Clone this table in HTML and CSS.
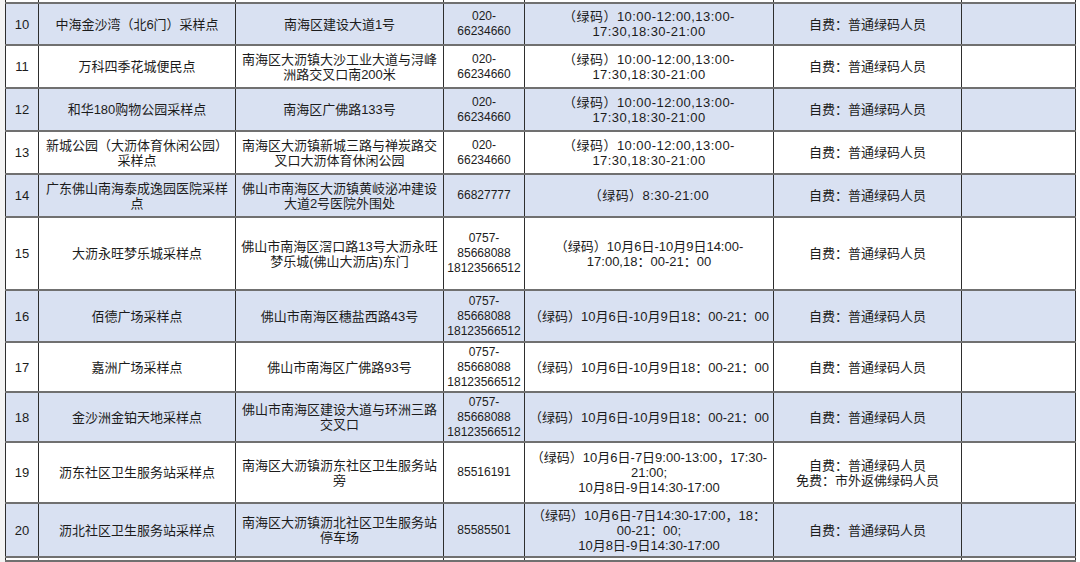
FILE: index.html
```html
<!DOCTYPE html>
<html lang="zh-CN">
<head>
<meta charset="utf-8">
<title>采样点</title>
<link rel="stylesheet" href="styles.css">
</head>
<body>
<div class="sheet">
<table class="grid">
<colgroup>
<col class="c1"><col class="c2"><col class="c3"><col class="c4"><col class="c5"><col class="c6"><col class="c7">
</colgroup>
<tbody>
<tr class="stub"><td></td><td></td><td></td><td></td><td></td><td></td><td></td></tr>
<tr class="blue h43a"><td>10</td><td>中海金沙湾（北6门）采样点</td><td>南海区建设大道1号</td><td class="tel">020-<br>66234660</td><td class="time">（绿码）10:00-12:00,13:00-<br>17:30,18:30-21:00</td><td>自费：普通绿码人员</td><td></td></tr>
<tr class="h43"><td>11</td><td>万科四季花城便民点</td><td>南海区大沥镇大沙工业大道与浔峰<br>洲路交叉口南200米</td><td class="tel">020-<br>66234660</td><td class="time">（绿码）10:00-12:00,13:00-<br>17:30,18:30-21:00</td><td>自费：普通绿码人员</td><td></td></tr>
<tr class="blue h43"><td>12</td><td>和华180购物公园采样点</td><td>南海区广佛路133号</td><td class="tel">020-<br>66234660</td><td class="time">（绿码）10:00-12:00,13:00-<br>17:30,18:30-21:00</td><td>自费：普通绿码人员</td><td></td></tr>
<tr class="h43"><td>13</td><td>新城公园（大沥体育休闲公园）<br>采样点</td><td>南海区大沥镇新城三路与禅炭路交<br>叉口大沥体育休闲公园</td><td class="tel">020-<br>66234660</td><td class="time">（绿码）10:00-12:00,13:00-<br>17:30,18:30-21:00</td><td>自费：普通绿码人员</td><td></td></tr>
<tr class="blue h43"><td>14</td><td>广东佛山南海泰成逸园医院采样<br>点</td><td>佛山市南海区大沥镇黄岐泌冲建设<br>大道2号医院外围处</td><td class="tel">66827777</td><td class="time">（绿码）8:30-21:00</td><td>自费：普通绿码人员</td><td></td></tr>
<tr class="h73"><td>15</td><td>大沥永旺梦乐城采样点</td><td>佛山市南海区滘口路13号大沥永旺<br>梦乐城(佛山大沥店)东门</td><td class="tel">0757-<br>85668088<br>18123566512</td><td>（绿码）10月6日-10月9日14:00-<br>17:00,18：00-21：00</td><td>自费：普通绿码人员</td><td></td></tr>
<tr class="blue h52"><td>16</td><td>佰德广场采样点</td><td>佛山市南海区穗盐西路43号</td><td class="tel">0757-<br>85668088<br>18123566512</td><td>（绿码）10月6日-10月9日18：00-21：00</td><td>自费：普通绿码人员</td><td></td></tr>
<tr class="h50"><td>17</td><td>嘉洲广场采样点</td><td>佛山市南海区广佛路93号</td><td class="tel">0757-<br>85668088<br>18123566512</td><td>（绿码）10月6日-10月9日18：00-21：00</td><td>自费：普通绿码人员</td><td></td></tr>
<tr class="blue h50"><td>18</td><td>金沙洲金铂天地采样点</td><td>佛山市南海区建设大道与环洲三路<br>交叉口</td><td class="tel">0757-<br>85668088<br>18123566512</td><td>（绿码）10月6日-10月9日18：00-21：00</td><td>自费：普通绿码人员</td><td></td></tr>
<tr class="h61"><td>19</td><td>沥东社区卫生服务站采样点</td><td>南海区大沥镇沥东社区卫生服务站<br>旁</td><td class="tel">85516191</td><td>（绿码）10月6日-7日9:00-13:00，17:30-<br>21:00;<br>10月8日-9日14:30-17:00</td><td>自费：普通绿码人员<br>免费：市外返佛绿码人员</td><td></td></tr>
<tr class="blue h54"><td>20</td><td>沥北社区卫生服务站采样点</td><td>南海区大沥镇沥北社区卫生服务站<br>停车场</td><td class="tel">85585501</td><td>（绿码）10月6日-7日14:30-17:00，18：<br>00-21：00;<br>10月8日-9日14:30-17:00</td><td>自费：普通绿码人员</td><td></td></tr>
<tr class="stub"><td></td><td></td><td></td><td></td><td></td><td></td><td></td></tr>
</tbody>
</table>
</div>
</body>
</html>
```
FILE: styles.css
```css
html, body {
  margin: 0;
  padding: 0;
  background: #ffffff;
}
.sheet {
  width: 1080px;
  height: 562px;
  overflow: hidden;
  padding-left: 5px;
  box-sizing: border-box;
  background: linear-gradient(to right, #f4f4f4 0, #f4f4f4 5px, #ffffff 5px);
}
.grid {
  border-collapse: collapse;
  table-layout: fixed;
  width: 1070px;
  font-family: "Liberation Sans", "Noto Sans CJK SC", sans-serif;
  font-size: 13px;
  line-height: 15px;
  color: #1c1c1c;
}
.c1 { width: 33px; }
.c2 { width: 197px; }
.c3 { width: 208px; }
.c4 { width: 81px; }
.c5 { width: 249px; }
.c6 { width: 188px; }
.c7 { width: 114px; }
.grid td {
  border-left: 1px solid #2e2e2e;
  border-right: 1px solid #2e2e2e;
  border-top: 2px solid #707070;
  border-bottom: 2px solid #707070;
  padding: 0;
  text-align: center;
  vertical-align: middle;
  white-space: nowrap;
  overflow: hidden;
}
.grid td.tel { font-size: 12px; }
.grid td.time { letter-spacing: 0.45px; }
.blue td { background: #d9e1f2; }
.stub td { height: 2px; border-top: none; }
.h43a td { height: 40px; }
.h43 td { height: 41px; }
.h73 td { height: 71px; }
.h52 td { height: 50px; }
.h50 td { height: 48px; }
.h61 td { height: 59px; }
.h54 td { height: 52px; }
```
